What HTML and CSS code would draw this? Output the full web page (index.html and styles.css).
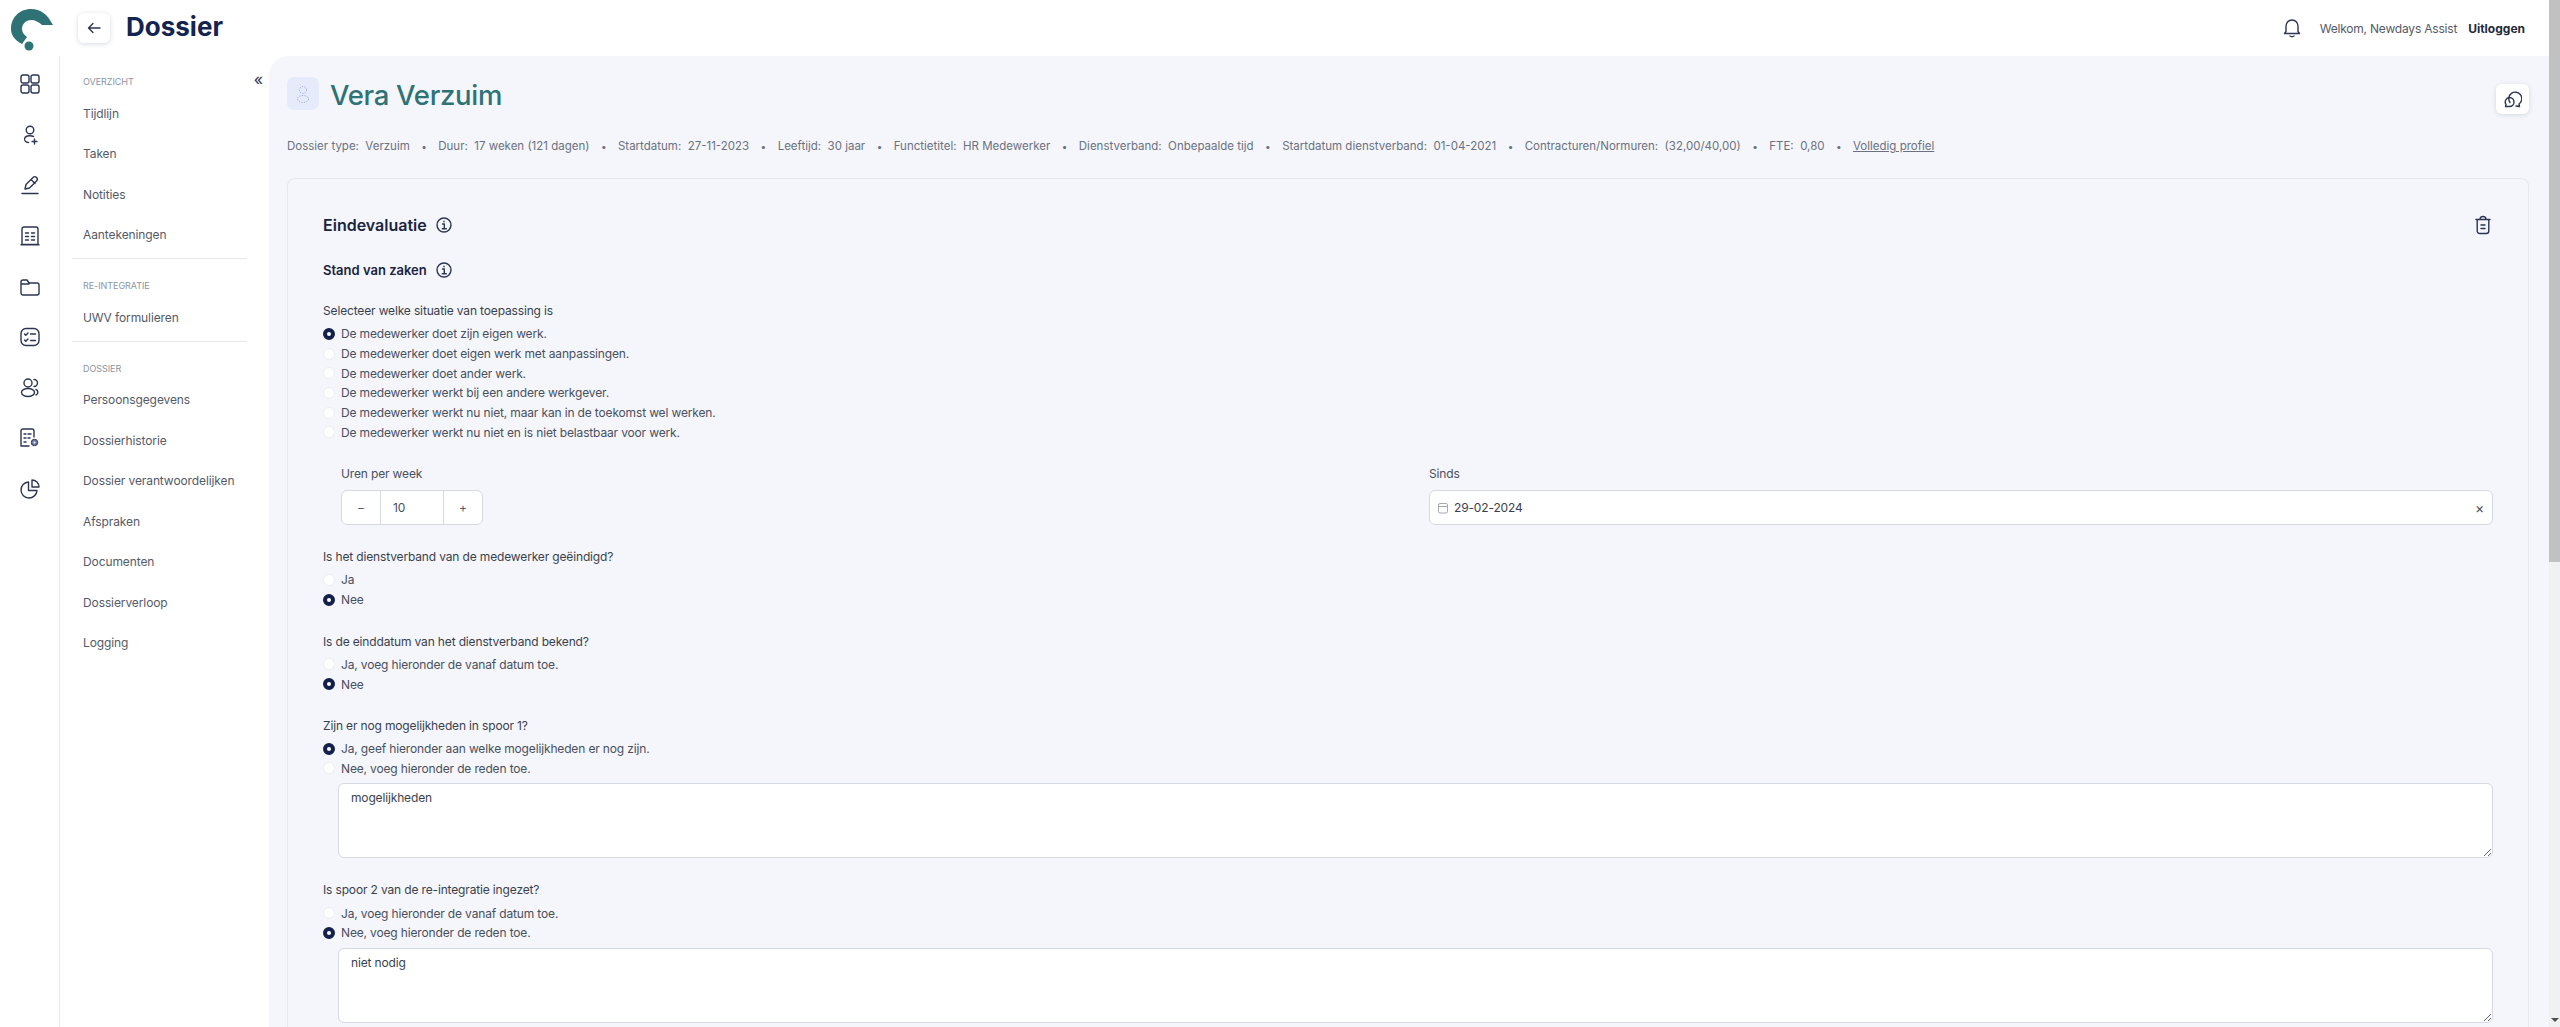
FILE: index.html
```html
<!DOCTYPE html>
<html lang="nl">
<head>
<meta charset="utf-8">
<title>Dossier</title>
<link rel="stylesheet" href="styles.css">
</head>
<body>
<div class="app">
  <div class="page">
    <header class="topbar">
      <svg class="logo" viewBox="0 0 60 56" width="60" height="56"><path class="logo-fill" d="M53 25 C47 14 41 9 31 9 C19 9 11 18 11 29 C11 34 14 40 22 44 L27 37 C24 35 22 32 22 29 C22 24 26 20 31 20 C35 20 39 22 42 25 Z"/><circle class="logo-fill" cx="29" cy="46" r="4.5"/></svg>
      <button class="back-btn" type="button"><svg viewBox="0 0 16 16" width="16" height="16"><path class="st" d="M14 8H2.5M7 3.5 2.5 8 7 12.5"/></svg></button>
      <h1 class="page-title">Dossier</h1>
      <div class="top-right">
        <svg class="bell" viewBox="0 0 18 20" width="18" height="20"><path class="st" d="M3 13.5V8a6 6 0 0 1 12 0v5.500l1.500 2h-15zM7 18c1.200.8 2.800.8 4 0"/></svg>
        <span class="welcome">Welkom, Newdays Assist</span>
        <span class="logout">Uitloggen</span>
      </div>
    </header>
    <div class="body-row">
      <nav class="rail">
        <div class="rail-item"><svg viewBox="0 0 20 20" width="20" height="20"><rect class="st" x="1" y="1" width="8" height="8" rx="2"/><rect class="st" x="11" y="1" width="8" height="8" rx="2"/><rect class="st" x="1" y="11" width="8" height="8" rx="2"/><rect class="st" x="11" y="11" width="8" height="8" rx="2"/></svg></div>
        <div class="rail-item"><svg viewBox="0 0 20 20" width="20" height="20"><circle class="st" cx="10" cy="5" r="3.800"/><path class="st" d="M13.500 11.500c-2-1-7-1.200-8.500 1-1.500 2.500.5 5 3.500 5M12 16.500h5M14.500 14v5"/></svg></div>
        <div class="rail-item"><svg viewBox="0 0 20 20" width="20" height="20"><path class="st" d="M5 14 6 9.500 13 2.500c1-1 2.500-1 3.500 0s1 2.500 0 3.500L9.500 13zM11 4.500 15 8.500"/><path class="st" d="M2 18.500h16"/></svg></div>
        <div class="rail-item"><svg viewBox="0 0 20 20" width="20" height="20"><path class="st" d="M2 18.500V3a2 2 0 0 1 2-2h12a2 2 0 0 1 2 2v15.500zM1 18.800h18M5.500 7h3M11.500 7h3M5.500 10.500h3M11.500 10.500h3M5.500 14h3M11.500 14h3"/></svg></div>
        <div class="rail-item"><svg viewBox="0 0 20 20" width="20" height="20"><path class="st" d="M1 5a2 2 0 0 1 2-2h4l2 3h8a2 2 0 0 1 2 2v8a2 2 0 0 1-2 2H3a2 2 0 0 1-2-2zM1 7h8"/></svg></div>
        <div class="rail-item"><svg viewBox="0 0 20 20" width="20" height="20"><rect class="st" x="1" y="1.500" width="18" height="17" rx="5"/><path class="st" d="M4.500 7l1.300 1.300L8 6M10.500 7h5M4.500 13l1.300 1.300L8 12M10.500 13.500h5"/></svg></div>
        <div class="rail-item"><svg viewBox="0 0 20 20" width="20" height="20"><circle class="st" cx="8" cy="5" r="4"/><ellipse class="st" cx="8" cy="14.500" rx="6.500" ry="4"/><path class="st" d="M14 1.500a3.500 3.500 0 0 1 0 7M16 11.500c2.500 1 2.500 4.500 0 5.500"/></svg></div>
        <div class="rail-item"><svg viewBox="0 0 20 20" width="20" height="20"><path class="st" d="M9 18H1V3a2 2 0 0 1 2-2h9a2 2 0 0 1 2 2v6M4 6h2M8 6h3M4 10h2M8 10h2M4 14h2"/><circle class="cog" cx="14.500" cy="14.500" r="3.200"/><circle class="cog-in" cx="14.500" cy="14.500" r="1"/></svg></div>
        <div class="rail-item"><svg viewBox="0 0 20 20" width="20" height="20"><path class="st" d="M8.500 3A8 8 0 1 0 17 11.500H8.500z"/><path class="st" d="M12 1a7 7 0 0 1 7 7h-7z"/></svg></div>
      </nav>
      <aside class="sidebar">
        <span class="collapse">«</span>
        <div class="side-label">OVERZICHT</div>
        <a class="side-link">Tijdlijn</a>
        <a class="side-link">Taken</a>
        <a class="side-link">Notities</a>
        <a class="side-link">Aantekeningen</a>
        <div class="side-rule"></div>
        <div class="side-label">RE-INTEGRATIE</div>
        <a class="side-link">UWV formulieren</a>
        <div class="side-rule"></div>
        <div class="side-label">DOSSIER</div>
        <a class="side-link">Persoonsgegevens</a>
        <a class="side-link">Dossierhistorie</a>
        <a class="side-link">Dossier verantwoordelijken</a>
        <a class="side-link">Afspraken</a>
        <a class="side-link">Documenten</a>
        <a class="side-link">Dossierverloop</a>
        <a class="side-link">Logging</a>
      </aside>
      <main class="main">
        <div class="person-row">
          <div class="avatar"><svg viewBox="0 0 14 20" width="14" height="20"><circle class="dots" cx="7" cy="6" r="3.500"/><ellipse class="dots" cx="7" cy="15" rx="5.500" ry="3.500"/></svg></div>
          <h2 class="person-name">Vera Verzuim</h2>
          <button class="chat-btn" type="button"><svg viewBox="0 0 18 18" width="18" height="18"><path class="st" d="M6 12.500A6.500 6.500 0 1 1 15 14l.5 2.500-3.500-.5"/><path class="st" d="M5.500 7.500a4.500 4.500 0 0 1 4.500 4.500 4.500 4.500 0 0 1-4.500 4.500H1.500l.5-2a4.500 4.500 0 0 1 3.500-7z"/></svg></button>
        </div>
        <div class="meta">
          <span>Dossier type:&nbsp; Verzuim</span><i>•</i>
          <span>Duur:&nbsp; 17 weken (121 dagen)</span><i>•</i>
          <span>Startdatum:&nbsp; 27-11-2023</span><i>•</i>
          <span>Leeftijd:&nbsp; 30 jaar</span><i>•</i>
          <span>Functietitel:&nbsp; HR Medewerker</span><i>•</i>
          <span>Dienstverband:&nbsp; Onbepaalde tijd</span><i>•</i>
          <span>Startdatum dienstverband:&nbsp; 01-04-2021</span><i>•</i>
          <span>Contracturen/Normuren:&nbsp; (32,00/40,00)</span><i>•</i>
          <span>FTE:&nbsp; 0,80</span><i>•</i>
          <a class="meta-link">Volledig profiel</a>
        </div>
        <section class="card">
          <div class="card-head">
            <h3 class="card-title">Eindevaluatie</h3>
            <svg class="info" viewBox="0 0 16 16" width="16" height="16"><circle class="st" cx="8" cy="8" r="7"/><path class="st" d="M6.500 7H8.300V11.500M6.300 11.800h4M8 4.200v.5"/></svg>
            <svg class="trash" viewBox="0 0 18 20" width="18" height="20"><path class="st" d="M2 4.500h14M6 4.500C6 2.500 7 1.500 9 1.500s3 1 3 3M3.200 4.500v11.500a2.500 2.500 0 0 0 2.500 2.500h6.600a2.500 2.500 0 0 0 2.500-2.500V4.500M7 10h4M7 13.500h4"/></svg>
          </div>
          <div class="sub-head">
            <h4 class="sub-title">Stand van zaken</h4>
            <svg class="info" viewBox="0 0 16 16" width="16" height="16"><circle class="st" cx="8" cy="8" r="7"/><path class="st" d="M6.500 7H8.300V11.500M6.300 11.800h4M8 4.200v.5"/></svg>
          </div>
          <form class="form">
            <div class="group">
              <div class="q">Selecteer welke situatie van toepassing is</div>
              <label class="opt"><input type="radio" name="a" checked>De medewerker doet zijn eigen werk.</label>
              <label class="opt"><input type="radio" name="a">De medewerker doet eigen werk met aanpassingen.</label>
              <label class="opt"><input type="radio" name="a">De medewerker doet ander werk.</label>
              <label class="opt"><input type="radio" name="a">De medewerker werkt bij een andere werkgever.</label>
              <label class="opt"><input type="radio" name="a">De medewerker werkt nu niet, maar kan in de toekomst wel werken.</label>
              <label class="opt"><input type="radio" name="a">De medewerker werkt nu niet en is niet belastbaar voor werk.</label>
            </div>
            <div class="fields">
              <div class="field">
                <div class="field-label">Uren per week</div>
                <div class="stepper"><span class="step-btn">−</span><span class="step-val">10</span><span class="step-btn">+</span></div>
              </div>
              <div class="field">
                <div class="field-label">Sinds</div>
                <div class="date">
                  <svg viewBox="0 0 12 12" width="12" height="12"><rect class="cal" x="1.500" y="1.500" width="9" height="9.500" rx="1.500"/><path class="cal" d="M1.500 4.500h9"/></svg>
                  <span class="date-val">29-02-2024</span>
                  <span class="date-x">×</span>
                </div>
              </div>
            </div>
            <div class="group">
              <div class="q">Is het dienstverband van de medewerker geëindigd?</div>
              <label class="opt"><input type="radio" name="b">Ja</label>
              <label class="opt"><input type="radio" name="b" checked>Nee</label>
            </div>
            <div class="group">
              <div class="q">Is de einddatum van het dienstverband bekend?</div>
              <label class="opt"><input type="radio" name="c">Ja, voeg hieronder de vanaf datum toe.</label>
              <label class="opt"><input type="radio" name="c" checked>Nee</label>
            </div>
            <div class="group">
              <div class="q">Zijn er nog mogelijkheden in spoor 1?</div>
              <label class="opt"><input type="radio" name="d" checked>Ja, geef hieronder aan welke mogelijkheden er nog zijn.</label>
              <label class="opt"><input type="radio" name="d">Nee, voeg hieronder de reden toe.</label>
              <textarea class="area">mogelijkheden</textarea>
            </div>
            <div class="group">
              <div class="q">Is spoor 2 van de re-integratie ingezet?</div>
              <label class="opt"><input type="radio" name="e">Ja, voeg hieronder de vanaf datum toe.</label>
              <label class="opt"><input type="radio" name="e" checked>Nee, voeg hieronder de reden toe.</label>
              <textarea class="area">niet nodig</textarea>
            </div>
          </form>
        </section>
      </main>
    </div>
  </div>
  <div class="scrollbar">
    <div class="thumb"></div>
    <div class="arrow"></div>
  </div>
</div>
</body>
</html>
```

FILE: styles.css
```css
* { box-sizing: border-box; }
html, body { margin: 0; height: 100%; overflow: hidden; }
body { font-family: Inter, "Open Sans", sans-serif; font-size: 12px; color: #4a4f5e; background: #fff; }
h1, h2, h3, h4 { margin: 0; }
button { padding: 0; border: 0; font: inherit; }

.st { fill: none; stroke: #2c3553; stroke-width: 1.400; stroke-linecap: round; stroke-linejoin: round; }
.logo-fill { fill: #2f7276; }

.app { display: flex; height: 1027px; }
.page { flex: 1; min-width: 0; display: flex; flex-direction: column; }
.scrollbar { width: 11px; background: #f1f1f1; position: relative; }
.thumb { height: 562px; background: #c1c1c1; }
.arrow { position: absolute; bottom: 5px; left: 2px; width: 0; height: 0; border: 4px solid transparent; border-top: 4px solid #505050; border-bottom: 0; }

.topbar { height: 56px; display: flex; align-items: center; flex: none; }
.logo { flex: none; margin-right: 18px; }
.back-btn { width: 32px; height: 30px; margin-top: -1px; border-radius: 6px; background: #fff; box-shadow: 0 1px 5px rgba(40, 50, 80, .18); display: flex; align-items: center; justify-content: center; }
.page-title { margin-left: 16px; font-size: 26px; line-height: 32px; font-weight: 700; color: #12244f; margin-top: -3px; }
.top-right { margin-left: auto; display: flex; align-items: center; padding-right: 24px; }
.bell { margin-right: 19px; }
.welcome { font-size: 12px; letter-spacing: -.2px; color: #555a68; margin-right: 11px; }
.logout { font-size: 12px; font-weight: 700; color: #232a3c; }

.body-row { flex: 1; min-height: 0; display: flex; }
.rail { width: 60px; flex: none; border-right: 1px solid #e5e7eb; padding-top: 3px; }
.rail-item { height: 50.600px; display: flex; align-items: center; justify-content: center; }
.cog { fill: #6d7bb0; stroke: #2c3553; stroke-width: 1; }
.cog-in { fill: #fff; }

.sidebar { width: 209px; flex: none; padding: 16px 22px 0 12px; position: relative; }
.collapse { position: absolute; top: 13px; right: 6px; font-size: 16px; line-height: 20px; color: #2c3553; }
.side-label { height: 20px; line-height: 20px; padding-left: 11px; margin-bottom: 1px; font-size: 9px; letter-spacing: -.05px; color: #8c94a3; }
.side-link { display: flex; align-items: center; height: 40.500px; padding-left: 11px; font-size: 12px; letter-spacing: -.1px; color: #555a68; }
.side-rule { height: 1px; background: #e5e7eb; margin: 3px 0 17px; }

.main { flex: 1; min-width: 0; background: #f4f6fb; border-top-left-radius: 20px; padding: 21px 20px 0 18px; overflow: hidden; }
.person-row { display: flex; align-items: center; height: 33px; }
.avatar { width: 32px; height: 33px; background: #e5ebfb; border-radius: 7px; display: flex; align-items: center; justify-content: center; }
.dots { fill: none; stroke: #8e9bc4; stroke-width: 1; stroke-dasharray: 1 1.500; }
.person-name { margin: 2px 0 0 11px; font-size: 27.500px; line-height: 36px; font-weight: 500; letter-spacing: -.3px; color: #2f7276; }
.chat-btn { margin-left: auto; margin-top: 10px; width: 33px; height: 30px; background: #fff; border-radius: 6px; box-shadow: 0 1px 5px rgba(40, 50, 80, .15); display: flex; align-items: center; justify-content: center; }

.meta { display: flex; align-items: center; height: 20px; margin-top: 26px; font-size: 11.500px; color: #6c7180; white-space: nowrap; }
.meta i { font-style: normal; width: 28.500px; text-align: center; font-size: 10px; }
.meta-link { text-decoration: underline; }

.card { margin-top: 22px; border: 1px solid #e6e8f0; border-bottom: 0; border-radius: 8px 8px 0 0; padding: 34px 0 0 35px; height: 900px; }
.card-head { display: flex; align-items: center; height: 24px; padding-right: 36px; }
.card-title { font-size: 16px; font-weight: 600; color: #1a2440; }
.info { margin-left: 9px; }
.trash { margin-left: auto; }
.sub-head { display: flex; align-items: center; height: 22px; margin-top: 22px; }
.sub-title { font-size: 13px; font-weight: 600; color: #1a2440; }

.form { display: flex; flex-direction: column; gap: 22px; margin-top: 20px; padding-right: 35px; letter-spacing: -.15px; }
.group { display: flex; flex-direction: column; }
.q { height: 20px; line-height: 20px; margin-bottom: 3px; color: #3a3f4e; font-size: 12px; }
.opt { display: flex; align-items: center; height: 19.700px; font-size: 12px; color: #4a4f5e; }
.opt input { appearance: none; width: 12px; height: 12px; margin: 0 6px 0 0; border-radius: 50%; background: #fff; border: 1px solid #eceef3; flex: none; }
.opt input:checked { border: 4px solid #12204a; }

.fields { display: grid; grid-template-columns: 1fr 1fr; column-gap: 24px; padding-left: 18px; }
.field-label { height: 20px; line-height: 20px; margin-bottom: 6px; color: #4a4f5e; }
.stepper { display: flex; width: 142px; height: 35px; background: #fff; border: 1px solid #d5d9e2; border-radius: 6px; align-items: stretch; }
.step-btn { width: 38px; display: flex; align-items: center; justify-content: center; color: #555a68; }
.step-val { width: 64px; border-left: 1px solid #d5d9e2; border-right: 1px solid #d5d9e2; padding-left: 12px; display: flex; align-items: center; }
.date { display: flex; align-items: center; height: 35px; background: #fff; border: 1px solid #d5d9e2; border-radius: 6px; padding: 0 8px 0 7px; }
.cal { fill: none; stroke: #a5a9b3; stroke-width: 1; }
.date-val { margin-left: 5px; color: #3a3f4e; }
.date-x { margin-left: auto; font-size: 14px; color: #4a4f5e; }

.area { display: block; width: auto; height: 75px; margin: 5px 0 0 15px; padding: 6px 12px; background: #fff; border: 1px solid #d5d9e2; border-radius: 6px; font: 12px Inter, "Open Sans", sans-serif; letter-spacing: -.15px; color: #3a3f4e; outline: none; }
```
